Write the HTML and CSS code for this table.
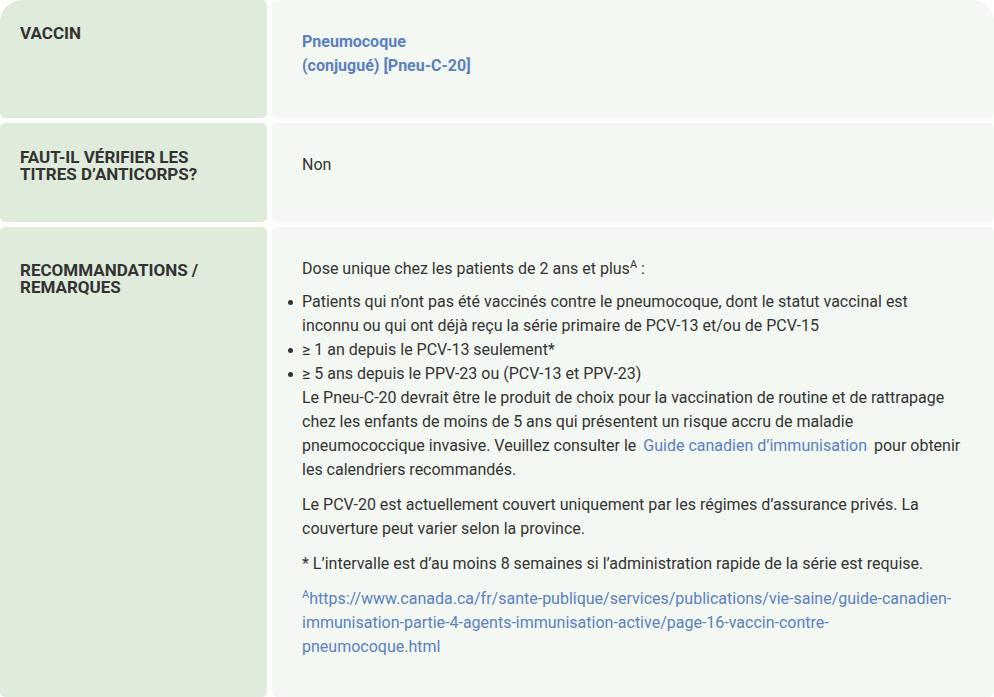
FILE: index.html
```html
<!DOCTYPE html>
<html lang="fr">
<head>
    <meta charset="UTF-8">
    <meta name="viewport" content="width=device-width, initial-scale=1.0">
    <title>Pneumocoque</title>
    <link rel="stylesheet" href="styles.css">
</head>
<body>
    <div class="vaccine-table">
        <!-- Row 1 -->
        <div class="label-cell first-label">VACCIN</div>
        <div class="value-cell first-value">
            <p class="vaccine-name">Pneumocoque<br>(conjugué) [Pneu-C-20]</p>
        </div>

        <!-- Row 2 -->
        <div class="label-cell row-two">FAUT-IL VÉRIFIER LES<br>TITRES D’ANTICORPS?</div>
        <div class="value-cell row-two-value">
            <p>Non</p>
        </div>

        <!-- Row 3 -->
        <div class="label-cell last-label">RECOMMANDATIONS /<br>REMARQUES</div>
        <div class="value-cell last-value">
            <p class="intro">Dose unique chez les patients de 2 ans et plus<sup>A</sup> :</p>
            <ul class="bullets">
                <li>Patients qui n’ont pas été vaccinés contre le pneumocoque, dont le statut vaccinal est inconnu ou qui ont déjà reçu la série primaire de PCV-13 et/ou de PCV-15</li>
                <li>≥ 1 an depuis le PCV-13 seulement*</li>
                <li>≥ 5 ans depuis le PPV-23 ou (PCV-13 et PPV-23)</li>
            </ul>
            <p>Le Pneu-C-20 devrait être le produit de choix pour la vaccination de routine et de rattrapage chez les enfants de moins de 5 ans qui présentent un risque accru de maladie pneumococcique invasive. Veuillez consulter le <a href="#" class="inline-link">Guide canadien d’immunisation</a> pour obtenir les calendriers recommandés.</p>
            <p>Le PCV-20 est actuellement couvert uniquement par les régimes d’assurance privés. La couverture peut varier selon la province.</p>
            <p>* L’intervalle est d’au moins 8 semaines si l’administration rapide de la série est requise.</p>
            <p class="source"><sup>A</sup><a href="#">https://www.canada.ca/fr/sante-publique/services/publications/vie-saine/guide-canadien-immunisation-partie-4-agents-immunisation-active/page-16-vaccin-contre-pneumocoque.html</a></p>
        </div>
    </div>
</body>
</html>
```

FILE: styles.css
```css
body {
    margin: 0;
    padding: 0;
    background: #ffffff;
    font-family: Roboto, "Liberation Sans", Arial, sans-serif;
    color: #333333;
}

.vaccine-table {
    display: grid;
    grid-template-columns: 267px 1fr;
    grid-template-rows: 118px 99px 1fr;
    gap: 5px;
    height: 697px;
}

.label-cell {
    background: #dfebdb;
    border-radius: 5px;
    padding: 25px 20px 20px 20px;
    font-size: 17px;
    font-weight: 700;
    line-height: 17px;
    color: #333333;
}

.first-label {
    border-top-left-radius: 22px;
}

.row-two {
    padding-top: 26px;
}

.last-label {
    padding-top: 35px;
}

.value-cell {
    background: #f3f8f2;
    border-radius: 5px;
    padding: 30px 30px 20px 30px;
    font-size: 16px;
    line-height: 24px;
}

.first-value {
    border-top-right-radius: 22px;
}

.value-cell p {
    margin: 0 0 11px 0;
}

.vaccine-name {
    color: #5b7fc0;
    font-weight: 700;
}

.value-cell .intro {
    margin-bottom: 9px;
}

sup {
    font-size: 11px;
    line-height: 0;
    vertical-align: 6px;
}

.bullets {
    margin: 0;
    padding-left: 0;
    list-style: none;
}

.bullets li {
    position: relative;
}

/* small round bullet */
.bullets li::before {
    content: "";
    position: absolute;
    left: -14px;
    top: 10px;
    width: 5px;
    height: 5px;
    border-radius: 50%;
    background: #333333;
}

a {
    color: #5b7fc0;
    text-decoration: none;
}

.inline-link {
    padding: 0 3px;
}

.source {
    color: #5b7fc0;
}
```
